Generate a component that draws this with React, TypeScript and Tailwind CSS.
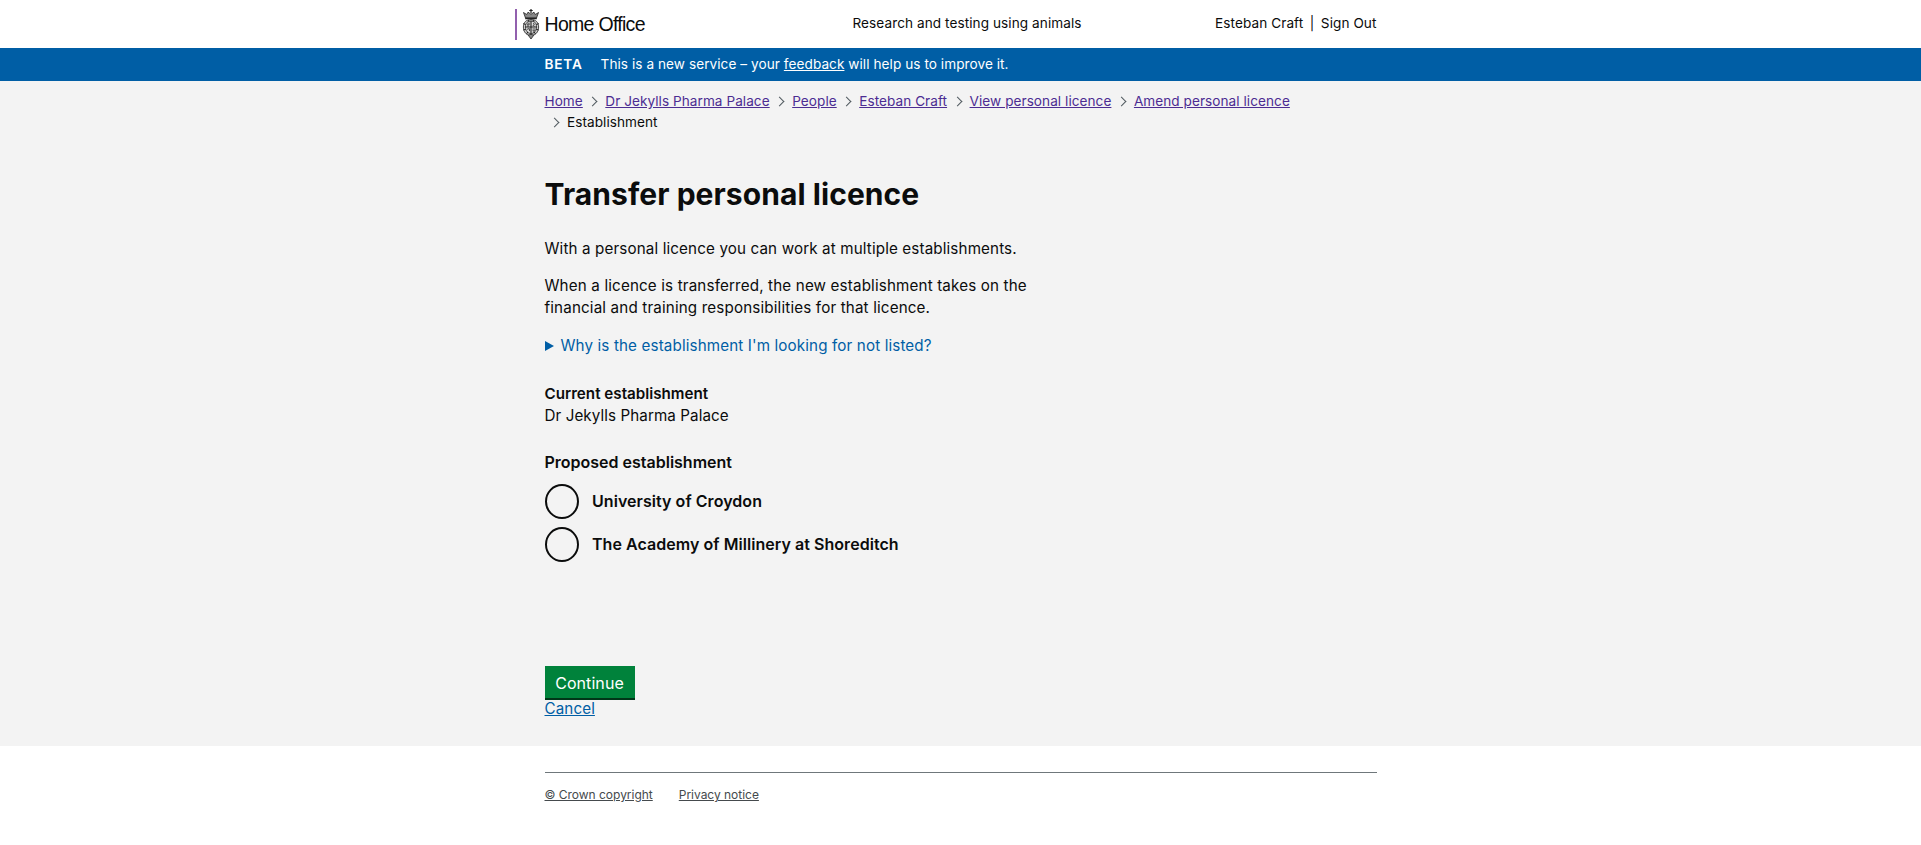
import React from "react";

const crumbs = ["Home", "Dr Jekylls Pharma Palace", "People", "Esteban Craft", "View personal licence", "Amend personal licence"];

function Chevron() {
  return <span className="mr-[9px] ml-[6.5px] inline-block size-[7px] rotate-45 border-t border-r border-[#505a5f] align-[1.5px]" />;
}

function Crest() {
  return (
    <svg width="18" height="31" viewBox="0 0 18 31" className="shrink-0" fill="none" stroke="#222" strokeWidth="0.8">
      <path d="M9 0v4M7.300 1.500h3.400" strokeWidth="1.200" />
      <path d="M1.500 3.500L3.500 9h11l2-5.500-3.200 2L12 3.200 9 5.200 6 3.200 4.700 5.500z" fill="#888" />
      <path d="M3.200 9.500h11.600" strokeWidth="1.500" />
      <path d="M9 10.500c4.500 0 7.600 2.500 7.600 7.500S13.500 26.500 9 26.500 1.400 23 1.400 18 4.500 10.500 9 10.500z" fill="#ccc" />
      <path d="M9 12c3.500 0 5.500 2 5.500 6S12 24.500 9 24.500 3.500 22 3.500 18 5.500 12 9 12z" fill="#ddd" />
      <path d="M9 12v12.500M3.700 18h10.600" strokeWidth="1.100" />
      <path d="M5.300 14.200h2.500M5 15.700h2.800M5 17h2M11 14l1.500 1-1.500 1.500 1.500.7M5 20.300l2.300-.8.3 2.500M10.500 20h3M10.500 21.700h2.500M11 23h1" />
      <path d="M1.400 14.500l2.300 1.200M16.600 14.500l-2.300 1.200M1.400 21l2.500-.8M16.600 21l-2.500-.8M4.500 25l1.300-2M13.500 25l-1.300-2M6.500 11l.5 1.700M11.500 11l-.5 1.700" strokeWidth="1" />
      <path d="M6.300 26.300L9 30l2.700-3.700L9 25.300z" fill="#888" />
    </svg>
  );
}

function Radio({ label }: { label: string }) {
  return (
    <label className="flex h-[35px] items-center gap-[13.500px] text-[16px] font-semibold tracking-[0.050px]">
      <input type="radio" name="establishment" className="m-0 h-[35px] w-[34px] appearance-none rounded-[50%] border-2 border-[#0b0c0c]" />
      <span className="pb-[2px]">{label}</span>
    </label>
  );
}

export default function App() {
  return (
    <div className="min-h-[845px] bg-white font-['Inter',sans-serif] text-[15.2px] leading-[22px] text-[#0b0c0c]">
      <header className="h-[48px]">
        <div className="mx-auto grid h-full w-[832px] grid-cols-[308px_1fr_auto] text-[13.6px] leading-[20px] tracking-[0.070px]">
          <div className="-ml-[30px] flex items-start pt-[9px]">
            <div className="mr-[5px] h-[31px] w-[2px] bg-[#9260ae]" />
            <Crest />
            <span className="mt-[5px] ml-[5px] font-['Liberation_Sans',sans-serif] text-[19.5px] tracking-[-0.700px]">Home Office</span>
          </div>
          <div className="pt-[13px]">Research and testing using animals</div>
          <div className="pt-[13px]">Esteban Craft<span className="mx-[6.5px]">|</span>Sign Out</div>
        </div>
      </header>
      <div className="h-[33px] bg-[#005ea5] text-white">
        <div className="mx-auto flex h-full w-[832px] items-center pb-px text-[13.6px] leading-[20px] tracking-[0.060px]">
          <strong className="mr-[18px] font-semibold tracking-[0.8px]">BETA</strong>
          <span>This is a new service – your <a className="underline">feedback</a> will help us to improve it.</span>
        </div>
      </div>
      <main className="h-[665px] bg-[#f3f3f3]">
        <div className="mx-auto w-[832px] pt-[10px]">
          <nav className="text-[13.6px] leading-[21px] tracking-[0.050px]">
            <div className="h-[21px] whitespace-nowrap">
              {crumbs.map((c, i) => (
                <React.Fragment key={c}>
                  {i > 0 && <Chevron />}
                  <a className="text-[#4c2c92] underline">{c}</a>
                </React.Fragment>
              ))}
            </div>
            <div className="h-[21px]"><Chevron />Establishment</div>
          </nav>
          <h1 className="mt-[40px] text-[30px] leading-[42px] font-bold tracking-[0.070px]">Transfer personal licence</h1>
          <p className="mt-[23px] tracking-[0.130px]">With a personal licence you can work at multiple establishments.</p>
          <p className="mt-[15px] w-[500px] tracking-[0.150px]">When a licence is transferred, the new establishment takes on the financial and training responsibilities for that licence.</p>
          <div className="mt-[16px] flex items-center tracking-[0.130px] text-[#005ea5]">
            <svg width="9" height="10" viewBox="0 0 9 10" className="mr-[7px]"><path d="M0 0l9 5-9 5z" fill="#005ea5" /></svg>
            Why is the establishment I'm looking for not listed?
          </div>
          <h3 className="mt-[26px] font-semibold">Current establishment</h3>
          <p className="tracking-[0.080px]">Dr Jekylls Pharma Palace</p>
          <h3 className="mt-[24px] text-[16px] font-semibold">Proposed establishment</h3>
          <div className="mt-[11px] flex flex-col gap-[8px]">
            <Radio label="University of Croydon" />
            <Radio label="The Academy of Millinery at Shoreditch" />
          </div>
          <button className="mt-[104px] block h-[34px] w-[90px] border-b-2 border-[#003618] bg-[#00823b] pt-px text-[16px] tracking-[0.080px] text-white">Continue</button>
          <a className="-mt-[2px] block tracking-[0.100px] text-[#005ea5] underline">Cancel</a>
        </div>
      </main>
      <footer className="mx-auto mt-[26px] flex w-[832px] gap-[26px] border-t border-[#6f777b] pt-[12px] text-[12px] leading-[20px] tracking-[-0.020px] text-[#454a4d]">
        <a className="underline">© Crown copyright</a>
        <a className="underline">Privacy notice</a>
      </footer>
    </div>
  );
}
